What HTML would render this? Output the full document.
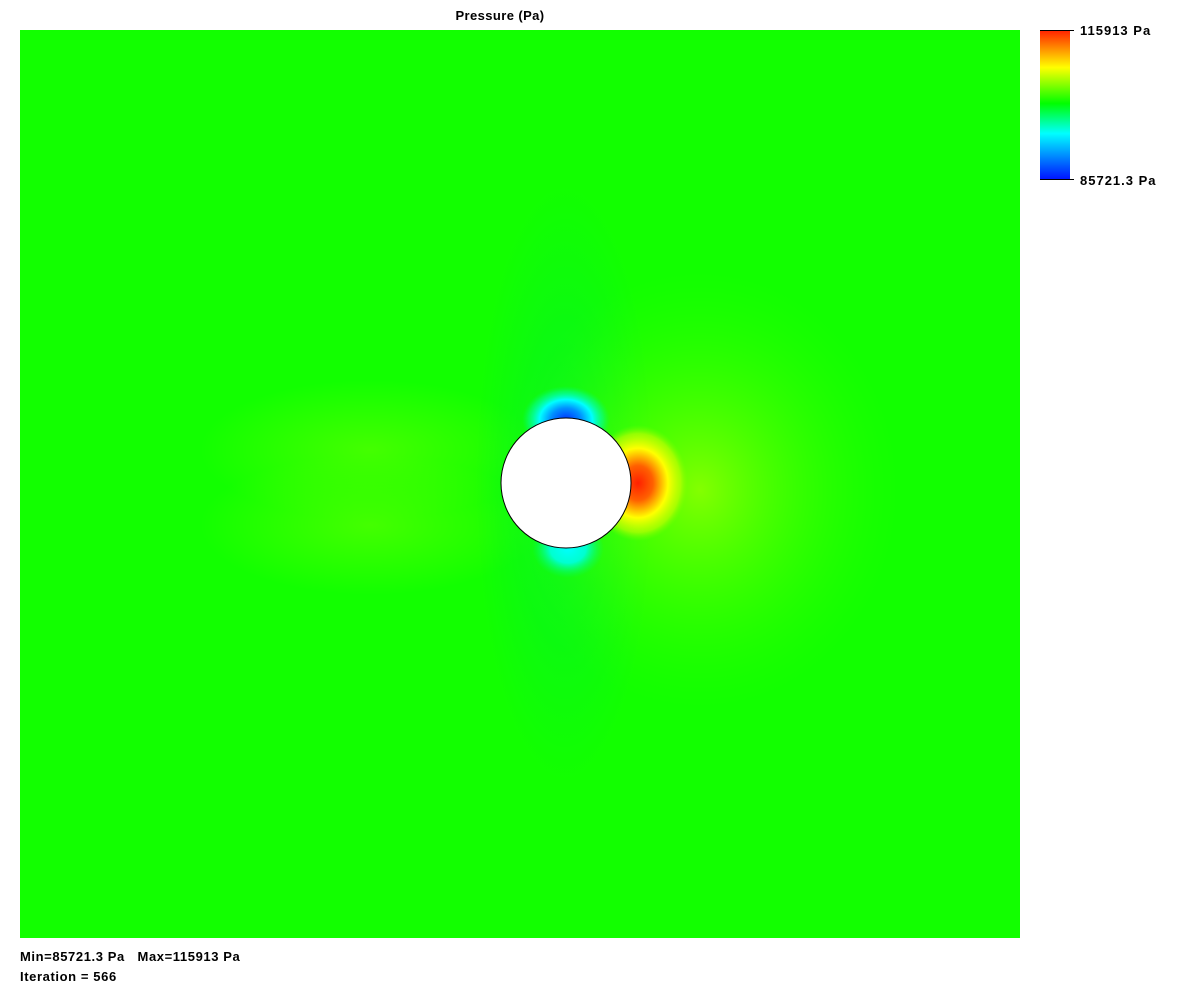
<!DOCTYPE html>
<html><head><meta charset="utf-8"><style>
html,body{margin:0;padding:0;background:#fff;width:1200px;height:1000px;overflow:hidden}
svg{display:block}
text{font-family:"Liberation Sans",sans-serif;font-size:13px;font-weight:bold;fill:#000;letter-spacing:0.4px}
</style></head><body>
<svg width="1200" height="1000" viewBox="0 0 1200 1000">
<defs>
<linearGradient id="cb" x1="0" y1="0" x2="0" y2="1">
<stop offset="0" stop-color="#ff2000"/>
<stop offset="0.25" stop-color="#ffff00"/>
<stop offset="0.49" stop-color="#00ff00"/>
<stop offset="0.69" stop-color="#00ffff"/>
<stop offset="1" stop-color="#0010ff"/>
</linearGradient>
<radialGradient id="red" cx="0.5" cy="0.5" r="0.5">
<stop offset="0" stop-color="#ff2000"/>
<stop offset="0.3" stop-color="#ff6000"/>
<stop offset="0.6" stop-color="#ffff00"/>
<stop offset="0.85" stop-color="#d0ff00" stop-opacity="0.6"/>
<stop offset="1" stop-color="#80ff00" stop-opacity="0"/>
</radialGradient>
<radialGradient id="halo" cx="0.5" cy="0.5" r="0.5">
<stop offset="0" stop-color="#a0ff00" stop-opacity="0.8"/>
<stop offset="0.4" stop-color="#70ff00" stop-opacity="0.5"/>
<stop offset="1" stop-color="#30ff00" stop-opacity="0"/>
</radialGradient>
<radialGradient id="blue" cx="0.5" cy="0.5" r="0.5">
<stop offset="0" stop-color="#0030ff"/>
<stop offset="0.35" stop-color="#0090ff"/>
<stop offset="0.6" stop-color="#00ffff"/>
<stop offset="0.85" stop-color="#00ffa0" stop-opacity="0.5"/>
<stop offset="1" stop-color="#00ff60" stop-opacity="0"/>
</radialGradient>
<radialGradient id="cyan" cx="0.5" cy="0.5" r="0.5">
<stop offset="0" stop-color="#00ffff"/>
<stop offset="0.5" stop-color="#00ffd0"/>
<stop offset="1" stop-color="#00ff60" stop-opacity="0"/>
</radialGradient>
<radialGradient id="mid" cx="0.5" cy="0.5" r="0.5">
<stop offset="0" stop-color="#00f030" stop-opacity="0.7"/>
<stop offset="1" stop-color="#00f030" stop-opacity="0"/>
</radialGradient>
<radialGradient id="lg" cx="0.5" cy="0.5" r="0.5">
<stop offset="0" stop-color="#50ff00" stop-opacity="0.8"/>
<stop offset="1" stop-color="#50ff00" stop-opacity="0"/>
</radialGradient>
<clipPath id="plot"><rect x="20" y="30" width="1000" height="908"/></clipPath>
</defs>
<text x="500" y="20" text-anchor="middle">Pressure (Pa)</text>
<g clip-path="url(#plot)">
<rect x="20" y="30" width="1000" height="908" fill="#12ff00"/>
<ellipse cx="370" cy="450" rx="170" ry="70" fill="url(#lg)"/>
<ellipse cx="370" cy="525" rx="170" ry="70" fill="url(#lg)"/>
<ellipse cx="565" cy="483" rx="90" ry="300" fill="url(#mid)"/>
<ellipse cx="700" cy="490" rx="200" ry="220" fill="url(#halo)"/>
<ellipse cx="638" cy="483" rx="50" ry="58" fill="url(#red)"/>
<ellipse cx="566" cy="420" rx="44" ry="34" fill="url(#blue)"/>
<ellipse cx="568" cy="548" rx="36" ry="30" fill="url(#cyan)"/>
<circle cx="566" cy="483" r="65" fill="#fff" stroke="#000" stroke-width="1"/>
</g>
<rect x="1040" y="30" width="30" height="150" fill="url(#cb)"/>
<line x1="1040" y1="30.5" x2="1074" y2="30.5" stroke="#000"/>
<line x1="1040" y1="179.5" x2="1074" y2="179.5" stroke="#000"/>
<text x="1080" y="35" style="letter-spacing:1px">115913 Pa</text>
<text x="1080" y="185" style="letter-spacing:1px">85721.3 Pa</text>
<text x="20" y="961" style="letter-spacing:0.6px">Min=85721.3 Pa&#160;&#160;&#160;Max=115913 Pa</text>
<text x="20" y="981" style="letter-spacing:0.6px">Iteration = 566</text>
</svg>
</body></html>
